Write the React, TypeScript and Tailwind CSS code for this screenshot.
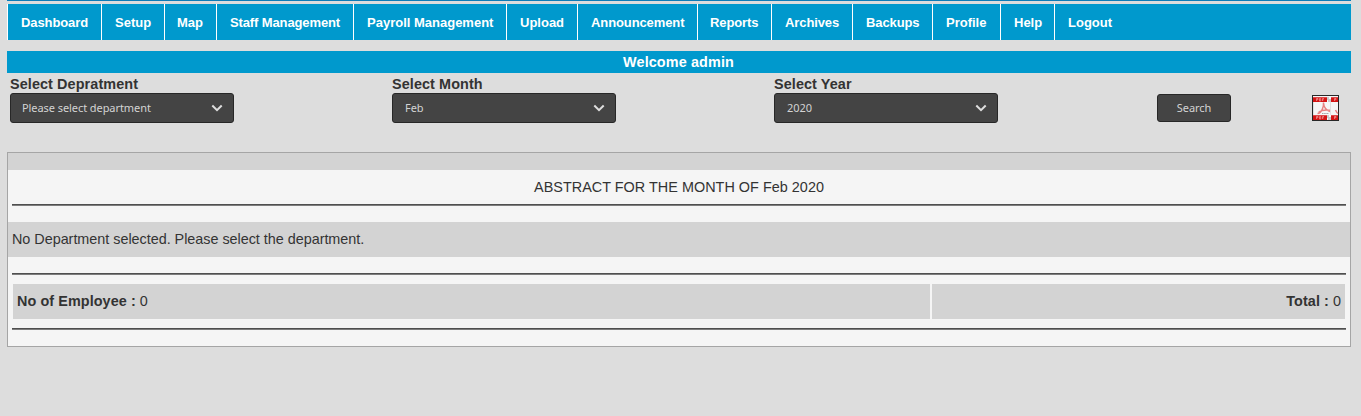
import { ReactNode } from "react";

const NAV: { label: string; box: string }[] = [
  { label: "Dashboard", box: "w-[94px] pl-[13px] tracking-[-0.1px]" },
  { label: "Setup", box: "w-[63px] pl-[13px]" },
  { label: "Map", box: "w-[52px] pl-[12px]" },
  { label: "Staff Management", box: "w-[137px] pl-[13px] tracking-[-0.12px]" },
  { label: "Payroll Management", box: "w-[153px] pl-[13px]" },
  { label: "Upload", box: "w-[71px] pl-[13px]" },
  { label: "Announcement", box: "w-[120px] pl-[13px] tracking-[-0.1px]" },
  { label: "Reports", box: "w-[74px] pl-[12px] tracking-[-0.1px]" },
  { label: "Archives", box: "w-[81px] pl-[13px] tracking-[-0.1px]" },
  { label: "Backups", box: "w-[80px] pl-[13px] tracking-[-0.1px]" },
  { label: "Profile", box: "w-[68px] pl-[13px]" },
  { label: "Help", box: "w-[54px] pl-[13px]" },
  { label: "Logout", box: "w-[80px] pl-[13px]" },
];

function Select({ label, value, pad }: { label: string; value: string; pad: string }) {
  return (
    <div className="w-[382px]">
      <div className="h-5 font-bold leading-[22px] tracking-[0.1px]">{label}</div>
      <button
        className={`flex h-[30px] w-[224px] items-center justify-between rounded-[3px] border border-[#272727] bg-[#444] pr-[10px] font-['Noto_Sans',sans-serif] text-[11px] tracking-[-0.07px] text-[#d3d3d3] ${pad}`}
      >
        <span>{value}</span>
        <svg width="12" height="8" viewBox="0 0 12 8" fill="none" stroke="#dedede" strokeWidth="2">
          <path d="M1.3 1.5 6 6.2l4.7-4.7" />
        </svg>
      </button>
    </div>
  );
}

function PdfBand({ y }: { y: number }) {
  return (
    <g>
      <rect x="1" y={y} width="14" height="5" fill="#d41414" />
      <rect x="19" y={y} width="7" height="5" fill="#d41414" />
      <rect x="1" y={y} width="14" height="1" fill="#de4a4a" />
      <rect x="19" y={y} width="7" height="1" fill="#de4a4a" />
      <path
        d={`M4.5 ${y + 4}v-2.5h1.5v1.2h-1.5M7.5 ${y + 1.5}v2.500h1.200v-2.500zM10.500 ${y + 4}v-2.500h1.500M10.500 ${y + 2.8}h1.200M22.500 ${y + 4}v-2.500h1.500v1.200h-1.500`}
        fill="none"
        stroke="#ee8d8d"
        strokeWidth=".8"
      />
      <path d={`M15 ${y}h2v2h2v3h-3v-2h-1z`} fill="#c9c9c9" />
    </g>
  );
}

function PdfIcon() {
  return (
    <svg width="27" height="26" viewBox="0 0 27 26" className="block">
      <rect width="27" height="26" fill="#272727" />
      <rect x="1" y="1" width="25" height="24" fill="#f6f6f6" />
      <path d="M1.5 7v13M18.5 7v13" stroke="#e0e0e0" strokeWidth="1" />
      <path
        d="M11.5 7.500C12 12 9.500 18.500 5.500 18.500M11.500 8c.3 4 2.500 7 6.500 8.500M6.500 17.500c2-1.800 7-3 11.500-2.300M23.500 15c.6 1.300 1.500 2.800 2.500 3.500"
        fill="none"
        stroke="#e88080"
        strokeWidth="1.500"
      />
      <path d="M10 18.5h7" stroke="#8b8b8b" strokeWidth=".8" strokeDasharray="1.5 .7" />
      <PdfBand y={2} />
      <PdfBand y={20} />
    </svg>
  );
}

function Rule() {
  return <div className="mx-1 h-0.5 border-t border-[#4f4f4f] bg-[#7d7d7d]" />;
}

function Cell({ children, className }: { children: ReactNode; className: string }) {
  return <div className={`h-[35px] bg-[#d3d3d3] px-1 leading-[35px] ${className}`}>{children}</div>;
}

export default function App() {
  return (
    <div className="h-[416px] w-[1361px] overflow-hidden bg-[#ddd] pl-[7px] pr-[10px] font-['Liberation_Sans',Arial,sans-serif] text-[14.4px] text-[#333]">
      <div className="h-px bg-[#0c7cb8]" />
      <nav className="mt-[3px] flex h-9 bg-[#0099cd] text-[13px] font-bold text-white">
        {NAV.map((item) => (
          <a key={item.label} className={`shrink-0 whitespace-nowrap border-l border-white leading-[37px] ${item.box}`}>
            {item.label}
          </a>
        ))}
      </nav>
      <header className="mt-[11px] h-[22px] bg-[#0099cd] pr-px text-center font-bold leading-[22px] tracking-[0.12px] text-white">
        Welcome admin
      </header>
      <form className="flex h-[79px] pl-[3px]" onSubmit={(e) => e.preventDefault()}>
        <Select label="Select Depratment" value="Please select department" pad="pl-[11px]" />
        <Select label="Select Month" value="Feb" pad="pl-[12px]" />
        <Select label="Select Year" value="2020" pad="pl-[12px]" />
        <button className="ml-px mt-[21px] h-7 w-[74px] rounded-[3px] border border-[#272727] bg-[#444] font-['Noto_Sans',sans-serif] text-[11px] tracking-[-0.07px] text-[#d3d3d3]">
          Search
        </button>
        <button className="ml-[81px] mt-[22px] h-[26px] w-[27px]" aria-label="PDF">
          <PdfIcon />
        </button>
      </form>
      <main className="h-[195px] border border-[#a5a5a5] bg-[#f5f5f5]">
        <div className="h-[17px] bg-[#d3d3d3]" />
        <div className="h-[34px] text-center leading-[35px] tracking-[0.03px]">ABSTRACT FOR THE MONTH OF Feb 2020</div>
        <Rule />
        <Cell className="mt-4 tracking-[-0.025px]">No Department selected. Please select the department.</Cell>
        <div className="h-4" />
        <Rule />
        <div className="mx-[5px] my-[9px] flex gap-0.5">
          <Cell className="w-[917px]">
            <b className="tracking-[0.08px]">No of Employee :</b> 0
          </Cell>
          <Cell className="flex-1 text-right">
            <b className="tracking-[0.1px]">Total :</b> 0
          </Cell>
        </div>
        <Rule />
      </main>
    </div>
  );
}
